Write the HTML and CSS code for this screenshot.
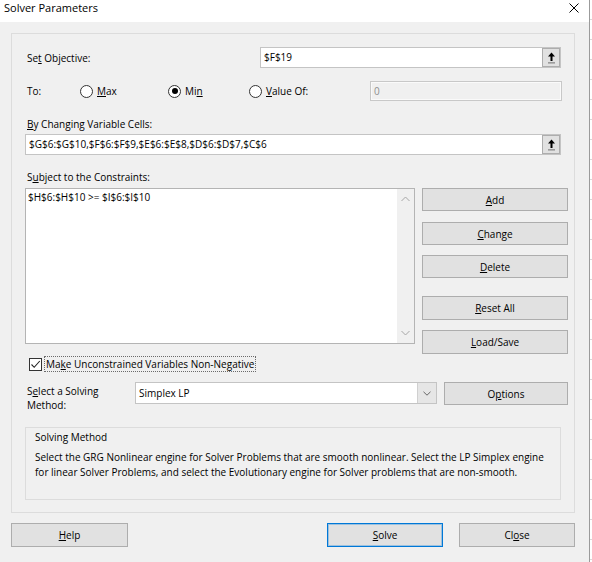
FILE: index.html
```html
<!DOCTYPE html>
<html lang="en">
<head>
<meta charset="utf-8">
<title>Solver Parameters</title>
<link rel="stylesheet" href="styles.css">
</head>
<body>
<div class="screen">
  <div class="window">
    <div class="titlebar">
      <span class="title">Solver Parameters</span>
      <svg class="close" width="10" height="10" viewBox="0 0 10 10"><path d="M0.5 0.5 L9.5 9.5 M9.5 0.5 L0.5 9.5" stroke="#000" stroke-width="1" fill="none"/></svg>
    </div>
    <div class="client">
      <div class="mainbox">
        <div class="row-obj">
          <span class="obj-lbl">Se<u>t</u> Objective:</span>
          <div class="field obj-field">
            <span class="val">$F$19</span>
            <span class="refbtn"><svg width="9" height="12" viewBox="0 0 9 12"><path d="M4.5 0.5 L8 4.5 H5.5 V9 H3.5 V4.5 H1 Z" fill="#000"/><rect x="1" y="10.2" width="7" height="1.3" fill="#8a8a8a"/></svg></span>
          </div>
        </div>
        <div class="row-to">
          <span class="to-lbl">To:</span>
          <span class="radio r-max"><span class="circle"></span><span><u>M</u>ax</span></span>
          <span class="radio r-min"><span class="circle on"></span><span>Mi<u>n</u></span></span>
          <span class="radio r-val"><span class="circle"></span><span><u>V</u>alue Of:</span></span>
          <div class="field disabled"><span class="val">0</span></div>
        </div>
        <div class="cap by"><u>B</u>y Changing Variable Cells:</div>
        <div class="field wide">
          <span class="val">$G$6:$G$10,$F$6:$F$9,$E$6:$E$8,$D$6:$D$7,$C$6</span>
          <span class="refbtn"><svg width="9" height="12" viewBox="0 0 9 12"><path d="M4.5 0.5 L8 4.5 H5.5 V9 H3.5 V4.5 H1 Z" fill="#000"/><rect x="1" y="10.2" width="7" height="1.3" fill="#8a8a8a"/></svg></span>
        </div>
        <div class="cap subj">S<u>u</u>bject to the Constraints:</div>
        <div class="constraints">
          <div class="listbox">
            <div class="items">$H$6:$H$10 &gt;= $I$6:$I$10</div>
            <div class="vscroll">
              <svg width="9" height="6" viewBox="0 0 9 6"><path d="M0.5 5 L4.5 1 L8.5 5" stroke="#a6a6a6" stroke-width="1" fill="none"/></svg>
              <svg width="9" height="6" viewBox="0 0 9 6"><path d="M0.5 1 L4.5 5 L8.5 1" stroke="#a6a6a6" stroke-width="1" fill="none"/></svg>
            </div>
          </div>
          <div class="btncol">
            <div class="btn b-add"><u>A</u>dd</div>
            <div class="btn b-change"><u>C</u>hange</div>
            <div class="btn b-delete"><u>D</u>elete</div>
            <div class="btn b-reset"><u>R</u>eset All</div>
            <div class="btn b-load"><u>L</u>oad/Save</div>
          </div>
        </div>
        <div class="checkrow">
          <span class="checkbox"><svg width="11" height="11" viewBox="0 0 11 11"><path d="M1.5 5.5 L4.2 8.3 L9.8 2" stroke="#222" stroke-width="1.1" fill="none"/></svg></span>
          <span class="focus">Ma<u>k</u>e Unconstrained Variables Non-Negative</span>
        </div>
        <div class="methodrow">
          <div class="method-lbl">S<u>e</u>lect a Solving<br>Method:</div>
          <div class="combo">
            <span class="val">Simplex LP</span>
            <span class="dropbtn"><svg width="8" height="5" viewBox="0 0 8 5"><path d="M0.5 0.8 L4 4.2 L7.5 0.8" stroke="#666" stroke-width="1" fill="none"/></svg></span>
          </div>
          <div class="btn b-options">O<u>p</u>tions</div>
        </div>
        <div class="descbox">
          <div class="desc-title">Solving Method</div>
          <div class="desc-text">
            <span class="line">Select the GRG Nonlinear engine for Solver Problems that are smooth nonlinear. Select the LP Simplex engine</span>
            <span class="line">for linear Solver Problems, and select the Evolutionary engine for Solver problems that are non-smooth.</span>
          </div>
        </div>
      </div>
      <div class="footer">
        <div class="btn b-help"><u>H</u>elp</div>
        <div class="spacer"></div>
        <div class="btn b-solve"><u>S</u>olve</div>
        <div class="btn b-close">Cl<u>o</u>se</div>
      </div>
    </div>
  </div>
  <div class="behind"></div>
</div>
</body>
</html>
```
FILE: styles.css
```css
* { box-sizing: border-box; }
html, body { margin: 0; padding: 0; }
body {
  width: 592px;
  height: 562px;
  overflow: hidden;
  font-family: "Open Sans", "Noto Sans", sans-serif;
  font-size: 10px;
  color: #000;
  background: #fff;
}
u { text-decoration: underline; text-underline-offset: 1px; text-decoration-thickness: 1px; }

.screen { display: flex; width: 592px; height: 562px; }
.window {
  width: 590px;
  height: 562px;
  border-right: 1px solid #9b9b9b;
  background: #f0f0f0;
  display: flex;
  flex-direction: column;
}
.behind {
  flex: 1;
  background: repeating-linear-gradient(to bottom, #fff 0 19px, #d9d9d9 19px 20px);
}

.titlebar {
  height: 22px;
  background: #fff;
  display: flex;
  justify-content: space-between;
  align-items: flex-start;
}
.title { font-size: 11px; line-height: 16px; padding-left: 4px; }
.close { margin-top: 3px; margin-right: 10px; }

.client { padding: 11px 0 0 11px; }

.mainbox {
  width: 564px;
  height: 480px;
  border: 1px solid #dcdcdc;
  padding: 13px 6px 0 13px;
}

.field {
  background: #fff;
  border: 1px solid #c4c4c4;
  height: 21px;
  display: flex;
  align-items: center;
}
.field .val { flex: 1; padding-left: 3px; line-height: 19px; white-space: nowrap; }
.refbtn {
  width: 18px;
  height: 19px;
  background: #e1e1e1;
  border: 1px solid #adadad;
  display: flex;
  align-items: center;
  justify-content: center;
}

.row-obj { display: flex; align-items: center; height: 21px; }
.obj-lbl { width: 235px; padding-left: 2px; }
.obj-field { width: 301px; }

.row-to { display: flex; align-items: center; margin-top: 13px; height: 20px; }
.to-lbl { width: 55px; padding-left: 2px; }
.radio { display: flex; align-items: center; gap: 4px; }
.r-max { width: 88px; }
.r-min { width: 81px; }
.r-val { width: 121px; }
.circle {
  width: 13px;
  height: 13px;
  border: 1px solid #333;
  border-radius: 50%;
  background: #fff;
  display: flex;
  align-items: center;
  justify-content: center;
}
.circle.on::after {
  content: "";
  width: 6px;
  height: 6px;
  border-radius: 50%;
  background: #000;
}
.field.disabled {
  width: 192px;
  height: 20px;
  background: #f0f0f0;
  border-color: #c8c8c8;
  box-shadow: inset 0 0 0 1px #fafafa;
  color: #8f8f8f;
}

.cap { line-height: 16px; padding-left: 2px; }
.by { margin-top: 15px; }
.wide { width: 536px; margin-top: 2px; }
.subj { margin-top: 14px; }

.constraints { display: flex; gap: 7px; margin-top: 3px; height: 166px; }
.listbox {
  width: 390px;
  height: 156px;
  background: #fff;
  border: 1px solid #b4b4b4;
  display: flex;
}
.items { flex: 1; padding: 0 2px; line-height: 16px; }
.vscroll {
  width: 17px;
  background: #f0f0f0;
  display: flex;
  flex-direction: column;
  align-items: center;
  justify-content: space-between;
  padding: 7px 0 7px;
}

.btncol { width: 146px; display: flex; flex-direction: column; }
.btn {
  height: 23px;
  background: #e1e1e1;
  border: 1px solid #adadad;
  display: flex;
  align-items: center;
  justify-content: center;
  white-space: nowrap;
}
.b-change { margin-top: 11px; }
.b-delete { margin-top: 10px; }
.b-reset { margin-top: 18px; height: 24px; }
.b-load { margin-top: 10px; height: 24px; }

.checkrow { display: flex; align-items: center; margin-top: 2px; height: 16px; padding-left: 4px; }
.checkbox {
  width: 13px;
  height: 13px;
  border: 1px solid #333;
  background: #fff;
  display: flex;
  align-items: center;
  justify-content: center;
  margin-right: 2px;
}
.focus {
  border: 1px dotted #6a6a6a;
  height: 16px;
  line-height: 14px;
  padding: 0 1px 0 1px;
}

.methodrow { display: flex; align-items: flex-start; margin-top: 10px; height: 30px; }
.method-lbl { width: 110px; padding-left: 2px; padding-top: 2px; line-height: 14px; }
.combo {
  width: 302px;
  height: 22px;
  background: #fff;
  border: 1px solid #c4c4c4;
  display: flex;
  align-items: center;
}
.combo .val { flex: 1; padding-left: 3px; }
.dropbtn {
  width: 19px;
  height: 20px;
  background: #e6e6e6;
  border-left: 1px solid #d0d0d0;
  display: flex;
  align-items: center;
  justify-content: center;
}
.b-options { width: 124px; margin-left: 7px; }

.descbox {
  width: 536px;
  height: 73px;
  margin-top: 15px;
  border: 1px solid #dcdcdc;
  padding: 1px 9px 0 9px;
}
.desc-title { line-height: 16px; }
.desc-text { margin-top: 5px; line-height: 15px; }
.desc-text .line { display: block; white-space: nowrap; }

.footer { display: flex; width: 564px; margin-top: 10px; }
.footer .btn { height: 24px; }
.b-help { width: 117px; }
.spacer { flex: 1; }
.b-solve { width: 116px; border-color: #0078d7; box-shadow: inset 0 0 0 1px rgba(0, 120, 215, 0.3); }
.b-close { width: 116px; margin-left: 16px; }
```
